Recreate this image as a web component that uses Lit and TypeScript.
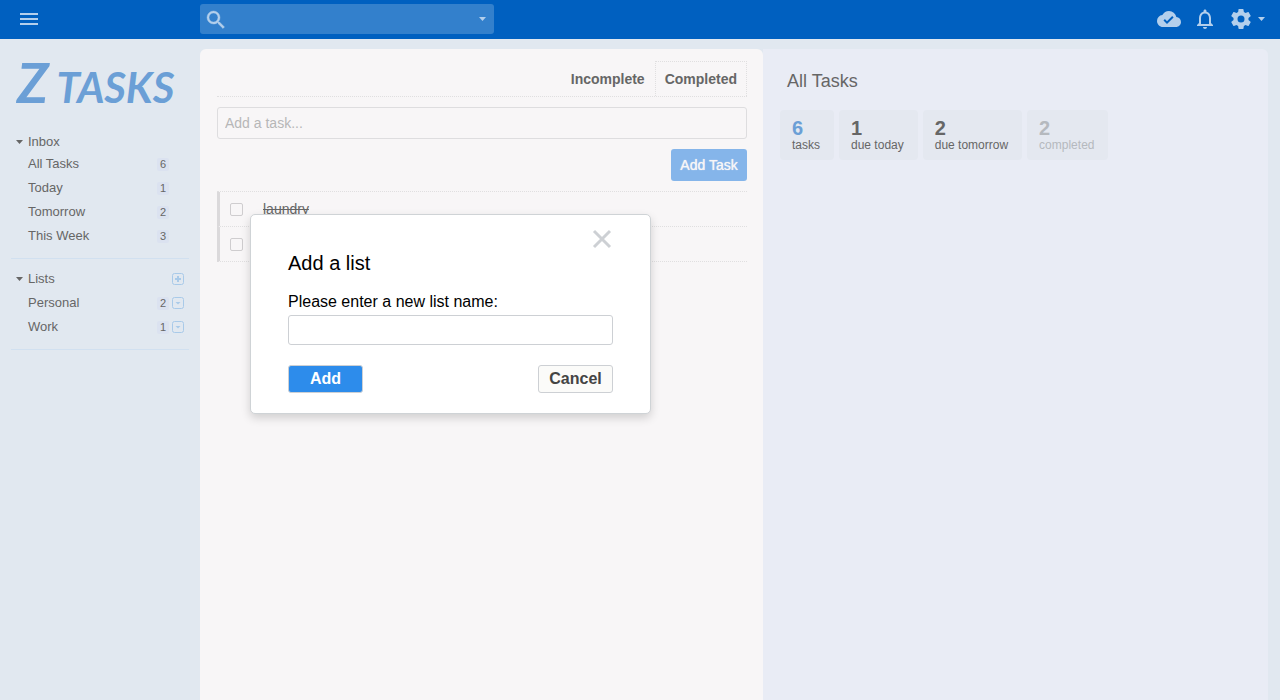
import { LitElement, html, css, svg } from "lit";
import { customElement, state } from "lit/decorators.js";
import { classMap } from "lit/directives/class-map.js";

interface Entry { name: string; count: number; }
interface Stat { value: number; label: string; kind: string; }

const caret = html`<svg class="caret" viewBox="0 0 8 4" preserveAspectRatio="none" aria-hidden="true"><path d="M0 0h8L4 4z" fill="currentColor"/></svg>`;
const smallBox = (inner: unknown) => html`<svg class="box-icon" viewBox="0 0 12 12" aria-hidden="true">
  <rect x=".5" y=".5" width="11" height="11" rx="2" fill="none" stroke="currentColor"/>${inner}</svg>`;

@customElement("app-root")
export class AppRoot extends LitElement {
  @state() private inbox: Entry[] = [
    { name: "All Tasks", count: 6 },
    { name: "Today", count: 1 },
    { name: "Tomorrow", count: 2 },
    { name: "This Week", count: 3 },
  ];
  @state() private lists: Entry[] = [
    { name: "Personal", count: 2 },
    { name: "Work", count: 1 },
  ];
  @state() private stats: Stat[] = [
    { value: 6, label: "tasks", kind: "total" },
    { value: 1, label: "due today", kind: "due" },
    { value: 2, label: "due tomorrow", kind: "due" },
    { value: 2, label: "completed", kind: "done" },
  ];
  @state() private dialogOpen = true;

  static styles = css`
    :host {
      display: flex;
      flex-direction: column;
      min-height: 100vh;
      background: #e1e8f0;
      color: #666;
      font-family: "Liberation Sans", Arial, sans-serif;
      font-size: 13px;
      position: relative;
    }
    * { box-sizing: border-box; }
    button { font: inherit; color: inherit; background: none; border: 0; padding: 0; margin: 0; display: flex; cursor: pointer; }
    input { font: inherit; margin: 0; outline: none; }
    a { color: inherit; text-decoration: none; }
    ul { list-style: none; margin: 0; padding: 0; }
    h1, h2, h3, p { margin: 0; font-weight: normal; }
    svg { display: block; flex: none; }
    .caret { width: 7px; height: 4px; }

    .topbar { display: flex; align-items: center; height: 39px; padding-bottom: 1px; background: #0060c0; color: #b3cfec; }
    .menu-slot { width: 200px; padding-left: 20px; flex: none; }
    .search { display: flex; align-items: center; width: 294px; height: 30px; padding: 0 8px 0 6px; border-radius: 3px; background: #3380cc; }
    .search input { flex: 1; min-width: 0; height: 30px; border: 0; background: none; color: #fff; font-size: 15px; }
    .tools { display: flex; align-items: center; margin-left: auto; padding-right: 15px; }
    .tools button { align-items: center; }
    .cloud { margin-right: 12px; }
    .bell { margin-right: 14px; }
    .settings { gap: 7px; }

    .body { flex: 1; display: grid; grid-template-columns: 200px minmax(0, 563fr) minmax(0, 517fr); }
    .side { padding: 18px 11px 0 11px; }
    .logo { display: block; height: 76px; padding-left: 6px; color: #6b9fd6; white-space: nowrap; font-family: "Permanent Marker", "Rock Salt", "Lato", cursive; font-style: italic; font-weight: bold; font-size: 42px; line-height: 50px; }
    .logo .initial { margin-right: 8px; font-size: 56px; }
    .group { border-bottom: 1px solid #d1e0f0; padding-bottom: 10px; margin-bottom: 8px; }
    .row { display: flex; align-items: center; height: 24px; padding: 0 5px 0 17px; }
    .row.head { padding-left: 5px; gap: 5px; }
    .row.head.first { height: 20px; margin-top: -1px; }
    .row a, .row h2 { flex: 1; font-size: 13px; line-height: 16px; }
    .count { width: 12px; height: 13px; border-radius: 2px; background: #dbe2f0; text-align: center; font-size: 11px; line-height: 13px; margin-right: 3px; }
    .tail { width: 12px; color: #a9cae9; }
    .box-icon { width: 12px; height: 12px; }

    .main { margin-top: 10px; padding: 12px 16px 0 17px; background: #f8f6f7; border-radius: 6px 6px 0 0; }
    .tabs { display: flex; justify-content: flex-end; border-bottom: 1px dotted #e0dfe0; }
    .tab { align-items: center; height: 35px; padding: 0 9px; border: 1px dotted transparent; border-bottom: 0; font-weight: bold; font-size: 14px; }
    .tab.active { border-color: #e0dfe0; }
    .new-task { display: flex; flex-direction: column; align-items: flex-end; gap: 10px; padding: 10px 0; }
    .new-task input { width: 100%; height: 32px; padding: 0 7px; border: 1px solid #dedddf; border-radius: 3px; background: transparent; font-size: 14px; }
    .new-task input::placeholder { color: #b7b7b7; opacity: 1; }
    .add-task { align-items: center; justify-content: center; width: 76px; height: 32px; border-radius: 3px; background: #85b5ea; color: #f8f6f7; font-size: 14px; text-shadow: 0 0 1px #f8f6f7; }
    .tasks { border-top: 1px dotted #e0dfe0; }
    .task { display: flex; align-items: center; height: 35px; padding-left: 10px; border-left: 3px solid #dbd9db; border-bottom: 1px dotted #e0dfe0; }
    .task label { display: flex; align-items: center; gap: 20px; font-size: 14px; text-decoration: line-through; }
    .task input { appearance: none; width: 13px; height: 13px; border: 1px solid #cfcdcf; border-radius: 2px; }

    .detail { margin: 10px 12px 0 0; padding: 21px 17px; background: #e9ecf5; border-radius: 0 6px 0 0; }
    .detail h2 { padding-left: 7px; font-size: 18px; line-height: 22px; }
    .stats { display: flex; flex-wrap: wrap; gap: 5px; margin-top: 18px; }
    .stat { height: 50px; padding: 8px 14px 0 12px; border-radius: 4px; background: #e4e8f0; }
    .stat strong { display: block; font-size: 20px; line-height: 20px; }
    .stat span { display: block; font-size: 12px; line-height: 14px; }
    .total strong { color: #6b9fd6; }
    .done { color: #b5b9be; }

    .dialog { position: absolute; left: 250px; top: 214px; width: 401px; padding: 14px 37px 20px; background: #fff; color: #000; border: 1px solid #cfd3d6; border-radius: 5px; box-shadow: 0 4px 10px rgba(0, 0, 0, .16); }
    .close { margin-left: auto; color: #cdd0d4; }
    .dialog h2 { margin-top: 2px; font-size: 20px; line-height: 24px; }
    .dialog label { display: block; margin-top: 17px; font-size: 16px; line-height: 20px; }
    .dialog input { display: block; width: 100%; height: 30px; margin-top: 3px; padding: 0 8px; border: 1px solid #cdd0d4; border-radius: 3px; background: #fff; font-size: 16px; }
    .actions { display: flex; justify-content: space-between; margin-top: 20px; }
    .actions button { align-items: center; justify-content: center; width: 75px; height: 28px; border: 1px solid #cdd0d4; border-radius: 3px; background: #fbfbf9; color: #444; font-size: 16px; font-weight: bold; }
    .actions .primary { background: #2d8ceb; color: #fff; }
  `;

  private close() { this.dialogOpen = false; }

  private row(e: Entry, menu: boolean) {
    return html`<li class="row"><a href="#">${e.name}</a><span class="count">${e.count}</span>
      ${menu
        ? html`<button class="tail" aria-label="${e.name} options">${smallBox(svg`<path d="M3.500 5h5L6 7.500z" fill="currentColor"/>`)}</button>`
        : html`<span class="tail"></span>`}</li>`;
  }

  render() {
    return html`
      <header class="topbar">
        <div class="menu-slot">
          <button aria-label="Menu"><svg width="18" height="12" viewBox="0 0 18 12" fill="currentColor"><path d="M0 0h18v2H0zM0 5h18v2H0zM0 10h18v2H0z"/></svg></button>
        </div>
        <div class="search">
          <svg width="19" height="19" viewBox="2 2 19 19" fill="currentColor" stroke="currentColor" stroke-width=".4"><path d="M15.5 14h-.79l-.28-.27A6.47 6.47 0 0 0 16 9.5 6.5 6.5 0 1 0 9.5 16c1.61 0 3.09-.59 4.23-1.57l.27.28v.79l5 4.99L20.49 19l-4.99-5zm-6 0C7.01 14 5 11.99 5 9.5S7.01 5 9.5 5 14 7.01 14 9.5 11.99 14 9.5 14z"/></svg>
          <input type="search" aria-label="Search">
          <button aria-label="Search options">${caret}</button>
        </div>
        <div class="tools">
          <button class="cloud" aria-label="Synced"><svg width="24" height="24" viewBox="0 0 24 24" fill="currentColor"><path d="M19.35 10.04A7.49 7.49 0 0 0 12 4C9.11 4 6.6 5.64 5.35 8.04A5.99 5.99 0 0 0 0 14c0 3.31 2.69 6 6 6h13c2.76 0 5-2.24 5-5 0-2.64-2.05-4.78-4.65-4.96zM10 17l-3.5-3.5 1.41-1.41L10 14.17 15.18 9l1.41 1.41L10 17z"/></svg></button>
          <button class="bell" aria-label="Notifications"><svg width="24" height="24" viewBox="0 0 24 24" fill="currentColor"><path d="M12 22c1.1 0 2-.9 2-2h-4c0 1.1.9 2 2 2zm6-6v-5c0-3.07-1.63-5.64-4.5-6.32V4c0-.83-.67-1.5-1.5-1.5s-1.5.67-1.5 1.5v.68C7.64 5.36 6 7.92 6 11v5l-2 2v1h16v-1l-2-2zm-2 1H8v-6c0-2.48 1.51-4.5 4-4.5s4 2.02 4 4.5v6z"/></svg></button>
          <button class="settings" aria-label="Settings"><svg width="20" height="20" viewBox="2 2 20 20" fill="currentColor"><path d="M19.43 12.98c.04-.32.07-.64.07-.98s-.03-.66-.07-.98l2.11-1.65c.19-.15.24-.42.12-.64l-2-3.46c-.12-.22-.39-.3-.61-.22l-2.49 1c-.52-.4-1.08-.73-1.69-.98l-.38-2.65A.49.49 0 0 0 14 2h-4c-.25 0-.46.18-.49.42l-.38 2.65c-.61.25-1.17.59-1.69.98l-2.49-1c-.23-.09-.49 0-.61.22l-2 3.46c-.13.22-.07.49.12.64l2.11 1.65c-.04.32-.07.65-.07.98s.03.66.07.98l-2.11 1.65c-.19.15-.24.42-.12.64l2 3.46c.12.22.39.3.61.22l2.49-1c.52.4 1.08.73 1.69.98l.38 2.65c.03.24.24.42.49.42h4c.25 0 .46-.18.49-.42l.38-2.65c.61-.25 1.17-.59 1.69-.98l2.49 1c.23.09.49 0 .61-.22l2-3.46c.12-.22.07-.49-.12-.64l-2.11-1.65zM12 15.5A3.5 3.5 0 1 1 12 8.500a3.500 3.500 0 0 1 0 7z"/></svg>${caret}</button>
        </div>
      </header>
      <div class="body">
        <nav class="side">
          <h1><a class="logo" href="#"><span class="initial">Z</span>TASKS</a></h1>
          <section class="group">
            <div class="row head first">${caret}<h2>Inbox</h2></div>
            <ul>${this.inbox.map((e) => this.row(e, false))}</ul>
          </section>
          <section class="group">
            <div class="row head">${caret}<h2>Lists</h2>
              <button class="tail" aria-label="Add a list" @click=${() => (this.dialogOpen = true)}>${smallBox(svg`<path d="M6 3v6M3 6h6" stroke="currentColor" stroke-width="2"/>`)}</button></div>
            <ul>${this.lists.map((e) => this.row(e, true))}</ul>
          </section>
        </nav>
        <main class="main">
          <div class="tabs">
            ${["Incomplete", "Completed"].map((t) => html`<button class=${classMap({ tab: true, active: t === "Completed" })}>${t}</button>`)}
          </div>
          <div class="new-task">
            <input type="text" placeholder="Add a task..." aria-label="Add a task">
            <button class="add-task">Add Task</button>
          </div>
          <ul class="tasks">
            <li class="task"><label><input type="checkbox">laundry</label></li>
            <li class="task"><input type="checkbox" aria-label="Completed task"></li>
          </ul>
        </main>
        <aside class="detail">
          <h2>All Tasks</h2>
          <div class="stats">
            ${this.stats.map((s) => html`<div class=${classMap({ stat: true, [s.kind]: true })}><strong>${s.value}</strong><span>${s.label}</span></div>`)}
          </div>
        </aside>
      </div>
      ${this.dialogOpen ? html`<div class="dialog" role="dialog" aria-labelledby="dialog-title">
        <button class="close" aria-label="Close" @click=${this.close}><svg width="22" height="20" viewBox="0 0 22 20"><path d="M3 2l16 16M19 2L3 18" stroke="currentColor" stroke-width="3"/></svg></button>
        <h2 id="dialog-title">Add a list</h2>
        <label for="list-name">Please enter a new list name:</label>
        <input id="list-name" type="text">
        <div class="actions">
          <button class="primary" @click=${this.close}>Add</button>
          <button @click=${this.close}>Cancel</button>
        </div>
      </div>` : null}
    `;
  }
}
